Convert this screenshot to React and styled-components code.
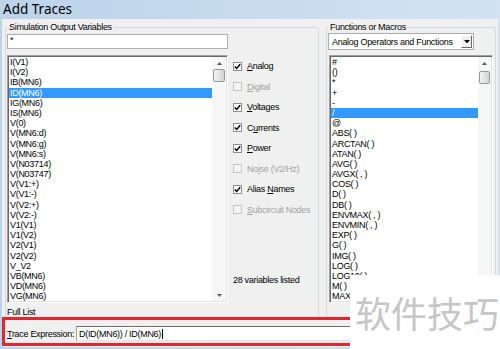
import React from 'react';
import styled, { createGlobalStyle } from 'styled-components';

const GlobalStyle = createGlobalStyle`
  html, body { margin: 0; padding: 0; }
  body {
    width: 500px; height: 349px; overflow: hidden;
    background: #c9dcf0;
    font-family: "Liberation Sans", Arial, sans-serif;
  }
  #root { width: 500px; height: 349px; }
`;

const uiFont = `
  font-family: "Liberation Sans", Arial, sans-serif;
  font-size: 9px;
  letter-spacing: -0.3px;
  color: #000;
`;

const Window = styled.div`
  position: relative;
  width: 500px;
  height: 349px;
  display: flex;
  flex-direction: column;
  background: linear-gradient(to right, #bcd3ea, #d3e3f3);
  overflow: hidden;
`;

const TitleBar = styled.div`
  height: 19px;
  flex: none;
  display: flex;
  align-items: center;
  padding: 0 0 2px 3px;
  box-sizing: border-box;
`;

const Title = styled.span`
  font-family: "Noto Sans", "Open Sans", sans-serif;
  font-size: 13.5px;
  color: #000;
`;

const Body = styled.div`
  flex: 1;
  min-height: 0;
  margin: 0 2px 2px;
  background: #f0f0f0;
  display: flex;
  flex-direction: column;
  padding-bottom: 1px;
`;

const Panels = styled.div`
  flex: 1;
  min-height: 0;
  display: flex;
  gap: 7px;
  margin-top: 3px;
  padding: 0 2px 0 3px;
`;

const Group = styled.fieldset`
  margin: 0;
  padding: 0 0 0 1px;
  min-width: 0;
  border: 1px solid #d3dbe0;
  border-bottom: none;
  border-radius: 3px 3px 0 0;
  display: flex;
  flex-direction: column;
  box-sizing: border-box;
  width: ${(p) => (p.$width ? `${p.$width}px` : 'auto')};
  flex: ${(p) => (p.$width ? 'none' : '1')};
`;

const Legend = styled.legend`
  ${uiFont};
  line-height: 10px;
  padding: 0 2px;
  margin-left: 0;
`;

const GroupContent = styled.div`
  flex: 1;
  min-height: 0;
  display: flex;
`;

const ListColumn = styled.div`
  width: 221px;
  flex: none;
  display: flex;
  flex-direction: column;
`;

const TextBox = styled.div`
  ${uiFont};
  height: 15px;
  box-sizing: border-box;
  margin-top: 2px;
  border: 1px solid #abadb3;
  background: #fff;
  padding-left: 2px;
  line-height: 11px;
`;

const ListBox = styled.div`
  height: 248px;
  width: ${(p) => p.$width}px;
  margin-top: ${(p) => p.$top}px;
  margin-left: ${(p) => p.$left || 0}px;
  box-sizing: border-box;
  border: 1px solid;
  border-color: #a0a0a0 #fff #fff #a0a0a0;
  box-shadow: inset 1px 1px #696969, inset -1px -1px #e3e3e3;
  background: #fff;
  display: flex;
  padding: 1px;
`;

const Items = styled.div`
  flex: 1;
  min-width: 0;
  overflow: hidden;
`;

const Item = styled.div`
  ${uiFont};
  height: 10.2px;
  line-height: 10.2px;
  padding-left: 1px;
  white-space: nowrap;
  background: ${(p) => (p.$selected ? '#3399ff' : 'transparent')};
  color: ${(p) => (p.$selected ? '#fff' : '#000')};
`;

const ScrollBar = styled.div`
  width: ${(p) => p.$w}px;
  flex: none;
  display: flex;
  flex-direction: column;
  background: #f6f6f6;
`;

const ArrowBtn = styled.div`
  height: 12px;
  flex: none;
  display: flex;
  align-items: center;
  justify-content: center;
`;

const Thumb = styled.div`
  height: ${(p) => p.$h}px;
  flex: none;
  margin: ${(p) => p.$gap}px 1px 0;
  box-sizing: border-box;
  border: 1px solid #989898;
  border-radius: 2px;
  background: linear-gradient(to right, #f4f4f4, #e4e4e4 50%, #d3d3d3);
`;

const Track = styled.div`
  flex: 1;
`;

const FullList = styled.div`
  ${uiFont};
  line-height: 10px;
  margin-top: 4px;
`;

const OptionsColumn = styled.div`
  flex: 1;
  display: flex;
  flex-direction: column;
  padding: 24px 0 0 5px;
`;

const OptionRow = styled.div`
  height: 20.5px;
  display: flex;
  align-items: center;
  gap: 5px;
`;

const Box = styled.span`
  width: 9px;
  height: 9px;
  box-sizing: border-box;
  flex: none;
  border: 1px solid ${(p) => (p.$disabled ? '#c6c6c6' : '#8e8f8f')};
  background: ${(p) => (p.$disabled ? '#f4f4f4' : '#fff')};
  display: flex;
  align-items: center;
  justify-content: center;
`;

const OptionLabel = styled.span`
  ${uiFont};
  line-height: 10px;
  color: ${(p) => (p.$disabled ? '#a3a3a3' : '#000')};
`;

const Accel = styled.span`
  text-decoration: underline;
  text-underline-offset: 1px;
`;

const Count = styled.div`
  ${uiFont};
  line-height: 10px;
  margin-top: auto;
  margin-bottom: 32px;
`;

const Select = styled.div`
  width: 146px;
  height: 17px;
  margin-top: 1px;
  box-sizing: border-box;
  border: 1px solid #abadb3;
  background: #fff;
  display: flex;
  align-items: center;
  padding: 0 1px 0 3px;
`;

const SelectText = styled.span`
  ${uiFont};
  flex: 1;
  line-height: 10px;
`;

const SelectButton = styled.div`
  width: 11px;
  height: 13px;
  box-sizing: border-box;
  border: 1px solid;
  border-color: #fff #696969 #696969 #fff;
  background: #f0f0f0;
  display: flex;
  align-items: center;
  justify-content: center;
`;

const TraceRow = styled.div`
  height: 29px;
  flex: none;
  box-sizing: border-box;
  border: 3px solid #e1272d;
  display: flex;
  align-items: center;
  padding: 4px 0 0 2px;
`;

const TraceLabel = styled.span`
  ${uiFont};
  line-height: 10px;
  width: 69px;
  flex: none;
  white-space: nowrap;
`;

const TraceInput = styled.div`
  ${uiFont};
  flex: 1;
  height: 15px;
  box-sizing: border-box;
  border: 1px solid;
  border-color: #6e6e6e #e3e3e3 #e3e3e3 #a0a0a0;
  background: #fff;
  padding-left: 2px;
  display: flex;
  align-items: center;
`;

const Caret = styled.span`
  width: 1px;
  height: 10px;
  background: #000;
  margin-left: 1px;
`;

const Watermark = styled.div`
  position: absolute;
  left: 350px;
  top: 275px;
  right: 0;
  bottom: 0;
  background: #fff;
  display: flex;
  align-items: center;
  padding-left: 5px;
  font-family: "Noto Sans CJK SC", sans-serif;
  font-size: 36px;
  line-height: 1;
  color: #c6c6c6;
`;

const UpArrow = () => (
  <svg width="5" height="3" viewBox="0 0 5 3"><path d="M2.5 0 L5 3 L0 3 Z" fill="#5a5a5a" /></svg>
);
const DownArrow = ({ color = '#5a5a5a', w = 5, h = 3 }) => (
  <svg width={w} height={h} viewBox="0 0 5 3"><path d="M0 0 L5 0 L2.5 3 Z" fill={color} /></svg>
);
const Check = () => (
  <svg width="7" height="7" viewBox="0 0 7 7">
    <path d="M0.8 3.4 L2.7 5.4 L6.2 1.2" stroke="#000" strokeWidth="1.5" fill="none" />
  </svg>
);

const leftItems = [
  'I(V1)', 'I(V2)', 'IB(MN6)', 'ID(MN6)', 'IG(MN6)', 'IS(MN6)', 'V(0)', 'V(MN6:d)',
  'V(MN6:g)', 'V(MN6:s)', 'V(N03714)', 'V(N03747)', 'V(V1:+)', 'V(V1:-)', 'V(V2:+)',
  'V(V2:-)', 'V1(V1)', 'V1(V2)', 'V2(V1)', 'V2(V2)', 'V_V2', 'VB(MN6)', 'VD(MN6)', 'VG(MN6)',
];

const rightItems = [
  '#', '()', '*', '+', '-', '/', '@', 'ABS( )', 'ARCTAN( )', 'ATAN( )', 'AVG( )',
  'AVGX( , )', 'COS( )', 'D( )', 'DB( )', 'ENVMAX( , )', 'ENVMIN( , )', 'EXP( )', 'G( )',
  'IMG( )', 'LOG( )', 'LOG10( )', 'M( )', 'MAX( )',
];

const options = [
  { pre: '', key: 'A', post: 'nalog', checked: true },
  { pre: '', key: 'D', post: 'igital', disabled: true },
  { pre: '', key: 'V', post: 'oltages', checked: true },
  { pre: 'C', key: 'u', post: 'rrents', checked: true },
  { pre: '', key: 'P', post: 'ower', checked: true },
  { pre: 'No', key: 'i', post: 'se (V2/Hz)', disabled: true },
  { pre: 'Alias ', key: 'N', post: 'ames', checked: true },
  { pre: '', key: 'S', post: 'ubcircuit Nodes', disabled: true },
];

const List = ({ items, selected, width, top, left, sbWidth, gap }) => (
  <ListBox $width={width} $top={top} $left={left}>
    <Items>
      {items.map((t, i) => (
        <Item key={t + i} $selected={i === selected}>{t}</Item>
      ))}
    </Items>
    <ScrollBar $w={sbWidth}>
      <ArrowBtn><UpArrow /></ArrowBtn>
      <Thumb $h={13} $gap={gap} />
      <Track />
      <ArrowBtn><DownArrow /></ArrowBtn>
    </ScrollBar>
  </ListBox>
);

export default function App() {
  return (
    <>
      <GlobalStyle />
      <Window>
        <TitleBar><Title>Add Traces</Title></TitleBar>
        <Body>
          <Panels>
            <Group $width={314}>
              <Legend>Simulation Output Variables</Legend>
              <GroupContent>
                <ListColumn>
                  <TextBox>*</TextBox>
                  <List items={leftItems} selected={3} width={221} top={6} sbWidth={14} gap={0} />
                  <FullList>Full List</FullList>
                </ListColumn>
                <OptionsColumn>
                  {options.map((o) => (
                    <OptionRow key={o.key + o.post}>
                      <Box $disabled={o.disabled}>{o.checked && <Check />}</Box>
                      <OptionLabel $disabled={o.disabled}>
                        {o.pre}<Accel>{o.key}</Accel>{o.post}
                      </OptionLabel>
                    </OptionRow>
                  ))}
                  <Count>28 variables listed</Count>
                </OptionsColumn>
              </GroupContent>
            </Group>
            <Group>
              <Legend>Functions or Macros</Legend>
              <Select>
                <SelectText>Analog Operators and Functions</SelectText>
                <SelectButton><DownArrow color="#000" w={6} h={3.5} /></SelectButton>
              </Select>
              <List items={rightItems} selected={5} width={164} top={5} left={1} sbWidth={13} gap={2} />
            </Group>
          </Panels>
          <TraceRow>
            <TraceLabel><Accel>T</Accel>race Expression:</TraceLabel>
            <TraceInput>D(ID(MN6)) / ID(MN6)<Caret /></TraceInput>
          </TraceRow>
        </Body>
        <Watermark>软件技巧</Watermark>
      </Window>
    </>
  );
}
